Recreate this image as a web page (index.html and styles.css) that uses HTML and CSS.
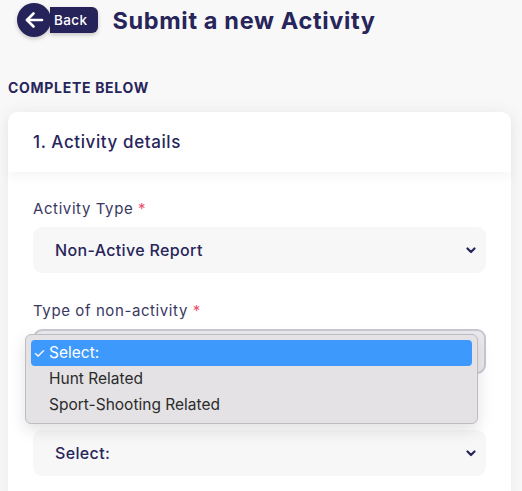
FILE: index.html
```html
<!DOCTYPE html>
<html lang="en">
<head>
  <meta charset="UTF-8" />
  <meta name="viewport" content="width=device-width, initial-scale=1.0"/>
  <title>Submit a new Activity</title>
  <link rel="stylesheet" href="styles.css">
</head>
<body>

  <div class="top-bar">
    <a href="#" class="back-btn">
      <span class="back-circle">
        <svg width="20" height="18" viewBox="0 0 20 18" fill="none" stroke="#fff" stroke-width="2.6" stroke-linecap="round" stroke-linejoin="round">
          <path d="M18 9H3"/>
          <path d="M9.5 2.5L3 9l6.5 6.5"/>
        </svg>
      </span>
      <span class="back-text">Back</span>
    </a>
    <h1>Submit a new Activity</h1>
  </div>

  <h2 class="section-title">Complete below</h2>

  <div class="card">
    <div class="card-header">1. Activity details</div>
    <div class="card-body">

      <div class="field">
        <label>Activity Type <span class="req">*</span></label>
        <div class="select-wrap">
          <select class="select">
            <option>Non-Active Report</option>
          </select>
          <svg class="chevron" width="10" height="7" viewBox="0 0 10 7" fill="none" stroke="#27255a" stroke-width="2.2" stroke-linecap="round" stroke-linejoin="round"><path d="M1.5 1.5L5 5l3.5-3.5"/></svg>
        </div>
      </div>

      <div class="field">
        <label>Type of non-activity <span class="req">*</span></label>
        <div class="select-wrap open">
          <select class="select">
            <option>Select:</option>
          </select>
          <svg class="chevron" width="10" height="7" viewBox="0 0 10 7" fill="none" stroke="#27255a" stroke-width="2.2" stroke-linecap="round" stroke-linejoin="round"><path d="M1.5 1.5L5 5l3.5-3.5"/></svg>
          <ul class="dropdown">
            <li class="active"><span class="tick">✓</span>Select:</li>
            <li>Hunt Related</li>
            <li>Sport-Shooting Related</li>
          </ul>
        </div>
      </div>

      <div class="field">
        <!-- label sits under the open menu -->
        <label class="hidden-label"></label>
        <div class="select-wrap">
          <select class="select">
            <option>Select:</option>
          </select>
          <svg class="chevron" width="10" height="7" viewBox="0 0 10 7" fill="none" stroke="#27255a" stroke-width="2.2" stroke-linecap="round" stroke-linejoin="round"><path d="M1.5 1.5L5 5l3.5-3.5"/></svg>
        </div>
      </div>

    </div>
  </div>

</body>
</html>
```

FILE: styles.css
```css
* {
  margin: 0;
  padding: 0;
  box-sizing: border-box;
}

body {
  font-family: 'Inter', 'Noto Sans', sans-serif;
  background: #f8f8f8;
  color: #27255a;
  padding: 3px 8px 0 8px;
  overflow: hidden;
}

.top-bar {
  display: flex;
  align-items: center;
  gap: 14px;
  height: 34px;
}

.back-btn {
  display: flex;
  align-items: center;
  margin-left: 9px;
  text-decoration: none;
  color: #fff;
  position: relative;
}

.back-circle {
  width: 34px;
  height: 34px;
  border-radius: 50%;
  background: #26235a;
  display: flex;
  align-items: center;
  justify-content: center;
  box-shadow: 0 2px 4px rgba(0, 0, 0, 0.2);
  position: relative;
  z-index: 1;
}

.back-text {
  background: #26235a;
  height: 26px;
  line-height: 26px;
  padding: 0 11px 0 4px;
  margin-left: -1px;
  border-radius: 0 6px 6px 0;
  font-size: 13.5px;
  font-weight: 500;
  letter-spacing: 0.4px;
  box-shadow: 0 2px 4px rgba(0, 0, 0, 0.2);
}

.top-bar h1 {
  font-size: 23.5px;
  font-weight: 700;
  letter-spacing: 0.65px;
  color: #27255a;
}

.section-title {
  margin-top: 43px;
  font-size: 14px;
  font-weight: 700;
  text-transform: uppercase;
  letter-spacing: 0.7px;
  color: #27255a;
  line-height: 16px;
}

.card {
  margin-top: 16px;
  width: 503px;
  background: #fff;
  border-radius: 10px 10px 0 0;
  box-shadow: 0 0 18px rgba(0, 0, 0, 0.06);
}

.card-header {
  height: 60px;
  display: flex;
  align-items: center;
  padding: 0 25px;
  font-size: 17px;
  font-weight: 500;
  letter-spacing: 0.6px;
  color: #27255a;
  box-shadow: 0 5px 10px rgba(0, 0, 0, 0.04);
  position: relative;
}

.card-body {
  padding: 27px 25px 30px 25px;
  display: flex;
  flex-direction: column;
  gap: 28px;
}

.field label {
  display: block;
  font-size: 15px;
  line-height: 20px;
  letter-spacing: 0.6px;
  color: #3a3862;
  margin-bottom: 8px;
}

.field .hidden-label {
  height: 20px;
}

.req {
  color: #ee4d70;
}

.select-wrap {
  position: relative;
}

.select {
  appearance: none;
  -webkit-appearance: none;
  width: 100%;
  height: 46px;
  border: none;
  border-radius: 9px;
  background: #f7f7f8;
  padding: 0 22px;
  font-family: inherit;
  font-size: 16px;
  font-weight: 500;
  letter-spacing: 0.35px;
  color: #27255a;
  outline: none;
}

.chevron {
  position: absolute;
  right: 10px;
  top: 20px;
}

.select-wrap.open .select {
  background: #ebeaee;
  border: 2px solid #c9c7d2;
  height: 45px;
}

.dropdown {
  position: absolute;
  top: 5px;
  left: -8px;
  width: 453px;
  list-style: none;
  background: #e4e2e4;
  border: 1px solid #bebcc1;
  border-radius: 6px;
  padding: 5px;
  box-shadow: 0 6px 16px rgba(0, 0, 0, 0.12);
  font-family: 'Inter', 'Liberation Sans', sans-serif;
  font-size: 15.5px;
  color: #2b2b2b;
  z-index: 2;
}

.dropdown li {
  height: 26px;
  line-height: 26px;
  padding-left: 18px;
  position: relative;
}

.dropdown li.active {
  background: #3e99fc;
  color: #fff;
  border-radius: 4px;
}

.tick {
  position: absolute;
  left: 2px;
  font-size: 14px;
}
```
